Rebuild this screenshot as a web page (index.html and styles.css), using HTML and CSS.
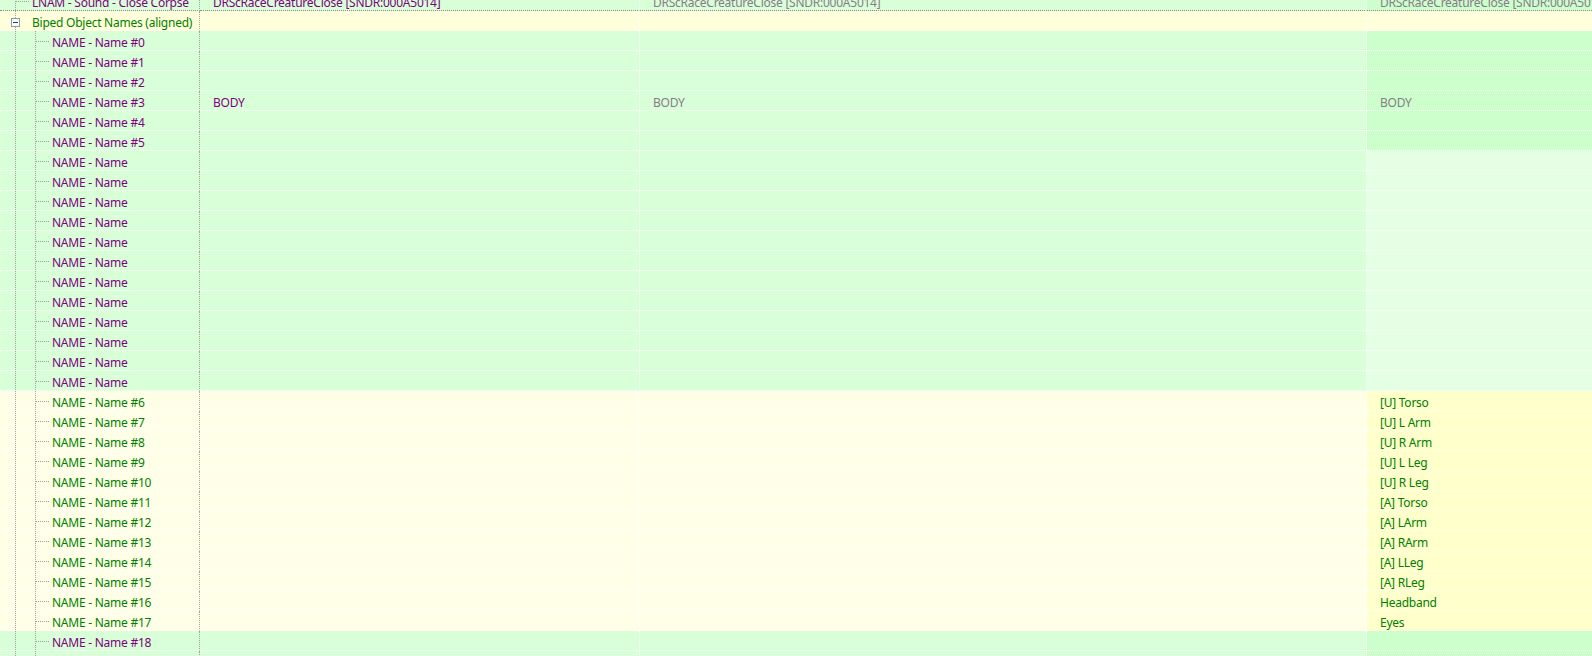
FILE: index.html
```html
<!DOCTYPE html>
<html lang="en">
<head>
    <meta charset="UTF-8">
    <title>Record View - Biped Object Names</title>
    <link rel="stylesheet" href="styles.css">
</head>
<body>
    <!-- Record compare grid -->
    <div class="grid">
        <div class="row green focus">
            <div class="cell lv1 purple">LNAM - Sound - Close Corpse</div>
            <div class="cell purple">DRScRaceCreatureClose [SNDR:000A5014]</div>
            <div class="cell grey">DRScRaceCreatureClose [SNDR:000A5014]</div>
            <div class="cell last grey">DRScRaceCreatureClose [SNDR:000A5014]</div>
        </div>
        <div class="row header">
            <div class="cell open green-text"><svg class="toggle" width="9" height="9" viewBox="0 0 9 9"><rect x="0.5" y="0.5" width="8" height="8" fill="#fbfcfd" stroke="#8a9bb0"/><path d="M2 4.5h5" stroke="#2f3f58"/></svg>Biped Object Names (aligned)</div>
            <div class="cell"></div>
            <div class="cell"></div>
            <div class="cell last"></div>
        </div>

        <!-- Names set on the base record -->
        <div class="row green"><div class="cell lv2 purple">NAME - Name #0</div><div class="cell"></div><div class="cell"></div><div class="cell last"></div></div>
        <div class="row green"><div class="cell lv2 purple">NAME - Name #1</div><div class="cell"></div><div class="cell"></div><div class="cell last"></div></div>
        <div class="row green"><div class="cell lv2 purple">NAME - Name #2</div><div class="cell"></div><div class="cell"></div><div class="cell last"></div></div>
        <div class="row green"><div class="cell lv2 purple">NAME - Name #3</div><div class="cell purple">BODY</div><div class="cell grey">BODY</div><div class="cell last grey">BODY</div></div>
        <div class="row green"><div class="cell lv2 purple">NAME - Name #4</div><div class="cell"></div><div class="cell"></div><div class="cell last"></div></div>
        <div class="row green"><div class="cell lv2 purple">NAME - Name #5</div><div class="cell"></div><div class="cell"></div><div class="cell last"></div></div>

        <!-- Unnumbered slots -->
        <div class="row green pale"><div class="cell lv2 purple">NAME - Name</div><div class="cell"></div><div class="cell"></div><div class="cell last"></div></div>
        <div class="row green pale"><div class="cell lv2 purple">NAME - Name</div><div class="cell"></div><div class="cell"></div><div class="cell last"></div></div>
        <div class="row green pale"><div class="cell lv2 purple">NAME - Name</div><div class="cell"></div><div class="cell"></div><div class="cell last"></div></div>
        <div class="row green pale"><div class="cell lv2 purple">NAME - Name</div><div class="cell"></div><div class="cell"></div><div class="cell last"></div></div>
        <div class="row green pale"><div class="cell lv2 purple">NAME - Name</div><div class="cell"></div><div class="cell"></div><div class="cell last"></div></div>
        <div class="row green pale"><div class="cell lv2 purple">NAME - Name</div><div class="cell"></div><div class="cell"></div><div class="cell last"></div></div>
        <div class="row green pale"><div class="cell lv2 purple">NAME - Name</div><div class="cell"></div><div class="cell"></div><div class="cell last"></div></div>
        <div class="row green pale"><div class="cell lv2 purple">NAME - Name</div><div class="cell"></div><div class="cell"></div><div class="cell last"></div></div>
        <div class="row green pale"><div class="cell lv2 purple">NAME - Name</div><div class="cell"></div><div class="cell"></div><div class="cell last"></div></div>
        <div class="row green pale"><div class="cell lv2 purple">NAME - Name</div><div class="cell"></div><div class="cell"></div><div class="cell last"></div></div>
        <div class="row green pale"><div class="cell lv2 purple">NAME - Name</div><div class="cell"></div><div class="cell"></div><div class="cell last"></div></div>
        <div class="row green pale"><div class="cell lv2 purple">NAME - Name</div><div class="cell"></div><div class="cell"></div><div class="cell last"></div></div>

        <!-- Names added by the override -->
        <div class="row yellow"><div class="cell lv2 green-text">NAME - Name #6</div><div class="cell"></div><div class="cell"></div><div class="cell last green-text">[U] Torso</div></div>
        <div class="row yellow"><div class="cell lv2 green-text">NAME - Name #7</div><div class="cell"></div><div class="cell"></div><div class="cell last green-text">[U] L Arm</div></div>
        <div class="row yellow"><div class="cell lv2 green-text">NAME - Name #8</div><div class="cell"></div><div class="cell"></div><div class="cell last green-text">[U] R Arm</div></div>
        <div class="row yellow"><div class="cell lv2 green-text">NAME - Name #9</div><div class="cell"></div><div class="cell"></div><div class="cell last green-text">[U] L Leg</div></div>
        <div class="row yellow"><div class="cell lv2 green-text">NAME - Name #10</div><div class="cell"></div><div class="cell"></div><div class="cell last green-text">[U] R Leg</div></div>
        <div class="row yellow"><div class="cell lv2 green-text">NAME - Name #11</div><div class="cell"></div><div class="cell"></div><div class="cell last green-text">[A] Torso</div></div>
        <div class="row yellow"><div class="cell lv2 green-text">NAME - Name #12</div><div class="cell"></div><div class="cell"></div><div class="cell last green-text">[A] LArm</div></div>
        <div class="row yellow"><div class="cell lv2 green-text">NAME - Name #13</div><div class="cell"></div><div class="cell"></div><div class="cell last green-text">[A] RArm</div></div>
        <div class="row yellow"><div class="cell lv2 green-text">NAME - Name #14</div><div class="cell"></div><div class="cell"></div><div class="cell last green-text">[A] LLeg</div></div>
        <div class="row yellow"><div class="cell lv2 green-text">NAME - Name #15</div><div class="cell"></div><div class="cell"></div><div class="cell last green-text">[A] RLeg</div></div>
        <div class="row yellow"><div class="cell lv2 green-text">NAME - Name #16</div><div class="cell"></div><div class="cell"></div><div class="cell last green-text">Headband</div></div>
        <div class="row yellow"><div class="cell lv2 green-text">NAME - Name #17</div><div class="cell"></div><div class="cell"></div><div class="cell last green-text">Eyes</div></div>

        <div class="row green"><div class="cell lv2 purple">NAME - Name #18</div><div class="cell"></div><div class="cell"></div><div class="cell last"></div></div>
        <div class="row green"><div class="cell lv2 purple">NAME - Name #19</div><div class="cell"></div><div class="cell"></div><div class="cell last"></div></div>
    </div>
</body>
</html>
```

FILE: styles.css
```css
/* Basic reset */
* {
    margin: 0;
    padding: 0;
    box-sizing: border-box;
}

:root {
    --guide: #a0a0a0;
    /* dotted tree guides, one dot every other pixel */
    --dots-v: repeating-linear-gradient(to bottom, var(--guide) 0 1px, transparent 1px 2px);
    --dots-h: repeating-linear-gradient(to right, var(--guide) 0 1px, transparent 1px 2px);
}

body {
    background-color: #d8ffd8;
    font-family: "Noto Sans", "Open Sans", sans-serif;
    font-size: 12px;
    letter-spacing: -0.25px;
    overflow: hidden;
}

/* Grid: the first row is scrolled partly out of view */
.grid {
    margin-top: -9px;
}

.row {
    display: grid;
    grid-template-columns: 200px 440px 727px 1fr;
    height: 20px;
}

.cell {
    height: 20px;
    line-height: 19px;
    padding-top: 2px;
    padding-left: 13px;
    white-space: nowrap;
    overflow: hidden;
    border-right: 1px dotted #fff;
    border-bottom: 1px dotted #fff;
}

.cell:first-child {
    border-right-color: var(--guide);
}

.cell.last {
    border-right: none;
}

/* Row colours */
.row.green .cell {
    background-color: #d8ffd8;
}

.row.green .cell.last {
    background-color: #ccffcc;
}

.row.green.pale .cell.last {
    background-color: #e5ffe5;
}

.row.header .cell {
    background-color: #ffffdb;
}

.row.yellow .cell {
    background-color: #ffffe8;
}

.row.yellow .cell.last {
    background-color: #ffffcc;
}

.row.focus .cell {
    border-bottom-color: #8a8a8a;
}

/* Text colours */
.purple {
    color: #800080;
}

.grey {
    color: #8a7b8a;
}

.green-text {
    color: #008000;
}

/* Tree column */
.row .cell.lv1 {
    padding-left: 32px;
    background-image: var(--dots-v), var(--dots-h);
    background-size: 1px 100%, 14px 1px;
    background-position: 15px 0, 16px 10px;
    background-repeat: no-repeat;
}

.row .cell.open {
    padding-left: 11px;
    background-image: var(--dots-v);
    background-size: 1px 100%;
    background-position: 15px 0;
    background-repeat: no-repeat;
}

.toggle {
    vertical-align: 0;
    margin-right: 12px;
}

.row .cell.lv2 {
    padding-left: 52px;
    background-image: var(--dots-v), var(--dots-v), var(--dots-h);
    background-size: 1px 100%, 1px 100%, 13px 1px;
    background-position: 15px 0, 35px 0, 36px 10px;
    background-repeat: no-repeat;
}
```
